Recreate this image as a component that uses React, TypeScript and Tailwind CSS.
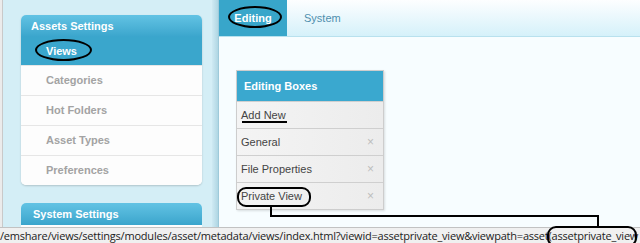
const menuItems = ["Categories", "Hot Folders", "Asset Types", "Preferences"];

const boxRows = [
  { label: "General", remove: true },
  { label: "File Properties", remove: true },
  { label: "Private View", remove: true },
];

const App = () => {
  return (
    <div
      className="relative w-[640px] h-[243px] overflow-hidden flex bg-[#f7fdff]"
      style={{ fontFamily: '"Liberation Sans", Arial, sans-serif' }}
    >
      {/* left window edge */}
      <div className="w-[3px] shrink-0 bg-[#ebebeb] border-r border-[#c9c9c9]" />

      {/* sidebar */}
      <aside className="w-[209px] shrink-0 bg-[#d4eef6] pt-[15px] pl-[18px]">
        <div className="w-[181px] rounded-[5px] overflow-hidden bg-white shadow-[0_1px_2px_rgba(0,0,0,0.18)]">
          <div className="h-[22px] flex items-center pl-[10px] bg-gradient-to-b from-[#62c3e4] to-[#3aa5cc] text-white text-[11px] font-bold">
            Assets Settings
          </div>
          <div className="h-[28px] flex items-center pl-[25px] bg-[#3aa6cc] text-white text-[11px] font-bold">
            Views
          </div>
          {menuItems.map((item) => (
            <div
              key={item}
              className="h-[30px] flex items-center pl-[25px] border-t border-[#e6e6e6] bg-[#fdfdfd] text-[#a3a3a3] text-[11px] font-bold"
            >
              {item}
            </div>
          ))}
        </div>

        <div className="mt-[18px] w-[181px] rounded-t-[5px] overflow-hidden bg-white">
          <div className="h-[22px] flex items-center pl-[12px] bg-gradient-to-b from-[#62c3e4] to-[#3aa5cc] text-white text-[11px] font-bold">
            System Settings
          </div>
          <div className="h-[10px] bg-[#fdfdfd]" />
        </div>
      </aside>

      {/* divider shade */}
      <div className="w-[7px] shrink-0 bg-gradient-to-r from-[#cfeaf3] to-[#afd6e3] border-r border-[#9ecada]" />

      {/* main */}
      <main className="flex-1 flex flex-col">
        <div className="h-[37px] flex border-b border-[#b8e1ee] bg-gradient-to-b from-[#fdfeff] to-[#d5f1fa]">
          <div className="w-[68px] flex items-center justify-center bg-[#38a6ca] text-white text-[11px] font-bold">
            Editing
          </div>
          <div className="flex items-center pl-[17px] text-[#4f8fae] text-[11px]">
            System
          </div>
        </div>

        <div className="pt-[33px] pl-[17px]">
          <div className="w-[148px] border border-[#cdcdcd] shadow-[1px_1px_2px_rgba(0,0,0,0.12)]">
            <div className="h-[30px] flex items-center pl-[7px] bg-[#3aa8cf] text-white text-[11px] font-bold">
              Editing Boxes
            </div>
            <div className="h-[27px] flex items-center pl-[4px] border-t border-[#cfcfcf] bg-gradient-to-r from-[#f4f4f4] to-[#ececec] text-[#444] text-[11px]">
              Add New
            </div>
            {boxRows.map((row) => (
              <div
                key={row.label}
                className="h-[27px] flex items-center justify-between pl-[4px] pr-[9px] border-t border-[#cfcfcf] bg-gradient-to-r from-[#f4f4f4] to-[#ececec] text-[#444] text-[11px]"
              >
                <span>{row.label}</span>
                {row.remove && <span className="text-[#bdbdbd] text-[12px]">×</span>}
              </div>
            ))}
          </div>
        </div>
      </main>

      {/* browser status bar */}
      <div
        className="absolute left-0 bottom-0 w-full h-[16px] bg-[#f0f0f0] border-t border-[#c2c2c2] text-[#222] text-[11px] leading-[15px] tracking-[-0.21px] whitespace-nowrap"
        style={{ fontFamily: '"Open Sans", "Noto Sans", sans-serif' }}
      >
        /emshare/views/settings/modules/asset/metadata/views/index.html?viewid=assetprivate_view&amp;viewpath=asset(assetprivate_view
      </div>

      {/* annotations */}
      <div className="absolute left-[35px] top-[39px] w-[57px] h-[22px] border-2 border-black rounded-[50%]" />
      <div className="absolute left-[228px] top-[6px] w-[54px] h-[22px] border-2 border-black rounded-[50%]" />
      <div className="absolute left-[242px] top-[121px] w-[45px] h-[2px] bg-black" />
      <div className="absolute left-[237px] top-[187px] w-[74px] h-[20px] border-2 border-black rounded-[9px]" />
      <div className="absolute left-[270px] top-[206px] w-[2px] h-[11px] bg-black" />
      <div className="absolute left-[270px] top-[215px] w-[329px] h-[2px] bg-black" />
      <div className="absolute left-[597px] top-[215px] w-[2px] h-[12px] bg-black" />
      <div className="absolute left-[547px] top-[226px] w-[90px] h-[21px] border-2 border-black rounded-[9px]" />
    </div>
  );
};

export default App;
